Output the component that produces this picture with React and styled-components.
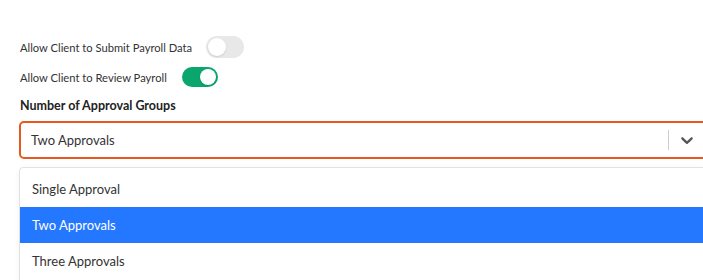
import React, { useState } from 'react';
import styled, { createGlobalStyle } from 'styled-components';

const GlobalStyle = createGlobalStyle`
  html, body {
    margin: 0;
    padding: 0;
    background: #fff;
    overflow: hidden;
  }
  body {
    font-family: Lato, "Liberation Sans", sans-serif;
    color: #333;
  }
`;

const Page = styled.div`
  width: 703px;
  height: 280px;
  overflow: hidden;
  padding: 36px 0 0 19px;
  box-sizing: border-box;
`;

const Form = styled.div`
  width: 688px;
  display: flex;
  flex-direction: column;
`;

const ToggleRow = styled.label`
  display: flex;
  align-items: center;
  gap: ${(p) => p.gap}px;
  height: 22px;
  margin-bottom: 8px;
  padding-left: 1px;
  font-size: 11.2px;
  color: #333;
  cursor: pointer;
`;

const Track = styled.span`
  position: relative;
  width: ${(p) => (p.on ? 36 : 38)}px;
  height: ${(p) => (p.on ? 20 : 22)}px;
  border-radius: 11px;
  background: ${(p) => (p.on ? '#0aa66d' : '#e8e8e8')};
  flex-shrink: 0;
`;

const Knob = styled.span`
  position: absolute;
  top: 2px;
  left: ${(p) => (p.on ? 18 : 2)}px;
  width: ${(p) => (p.on ? 16 : 18)}px;
  height: ${(p) => (p.on ? 16 : 18)}px;
  border-radius: 50%;
  background: #fff;
  box-shadow: 0 1px 2px rgba(0, 0, 0, 0.12);
`;

const GroupLabel = styled.div`
  font-size: 12.5px;
  font-weight: 700;
  color: #222;
  padding-left: 1px;
  margin-top: 2px;
  margin-bottom: 8px;
`;

const Control = styled.div`
  height: 38px;
  flex-shrink: 0;
  box-sizing: border-box;
  border: 2px solid #e8571f;
  border-radius: 5px;
  display: flex;
  align-items: center;
  background: #fff;
`;

const Value = styled.div`
  flex: 1;
  padding-left: 10px;
  font-size: 13px;
  color: #333;
`;

const Separator = styled.span`
  width: 1px;
  height: 20px;
  background: #ccc;
`;

const Indicator = styled.div`
  width: 36px;
  display: flex;
  justify-content: center;
  align-items: center;
  color: #555;
`;

const Menu = styled.div`
  margin-top: 8px;
  border: 1px solid #e2e2e2;
  border-radius: 4px;
  box-shadow: 0 2px 6px rgba(0, 0, 0, 0.06);
  padding: 3px 0 4px;
  background: #fff;
`;

const Option = styled.div`
  height: 36px;
  flex-shrink: 0;
  display: flex;
  align-items: center;
  padding-left: 12px;
  font-size: 13px;
  color: ${(p) => (p.selected ? '#fff' : '#333')};
  background: ${(p) => (p.selected ? '#2478ff' : 'transparent')};
`;

const options = ['Single Approval', 'Two Approvals', 'Three Approvals'];

function Toggle({ on }) {
  return (
    <Track on={on ? 1 : 0}>
      <Knob on={on ? 1 : 0} />
    </Track>
  );
}

export default function App() {
  const [value] = useState('Two Approvals');

  return (
    <>
      <GlobalStyle />
      <Page>
        <Form>
          <ToggleRow gap={14}>
            Allow Client to Submit Payroll Data
            <Toggle on={false} />
          </ToggleRow>
          <ToggleRow gap={15}>
            Allow Client to Review Payroll
            <Toggle on />
          </ToggleRow>
          <GroupLabel>Number of Approval Groups</GroupLabel>
          <Control>
            <Value>{value}</Value>
            <Separator />
            <Indicator>
              <svg width="20" height="20" viewBox="0 0 20 20" fill="currentColor">
                <path d="M4.516 7.548c0.436-0.446 1.043-0.481 1.576 0l3.908 3.747 3.908-3.747c0.533-0.481 1.141-0.446 1.574 0 0.436 0.445 0.408 1.197 0 1.615-0.406 0.418-4.695 4.502-4.695 4.502-0.217 0.223-0.502 0.335-0.787 0.335s-0.57-0.112-0.789-0.335c0 0-4.287-4.084-4.695-4.502s-0.436-1.17 0-1.615z" />
              </svg>
            </Indicator>
          </Control>
          <Menu>
            {options.map((o) => (
              <Option key={o} selected={o === value}>
                {o}
              </Option>
            ))}
          </Menu>
        </Form>
      </Page>
    </>
  );
}
